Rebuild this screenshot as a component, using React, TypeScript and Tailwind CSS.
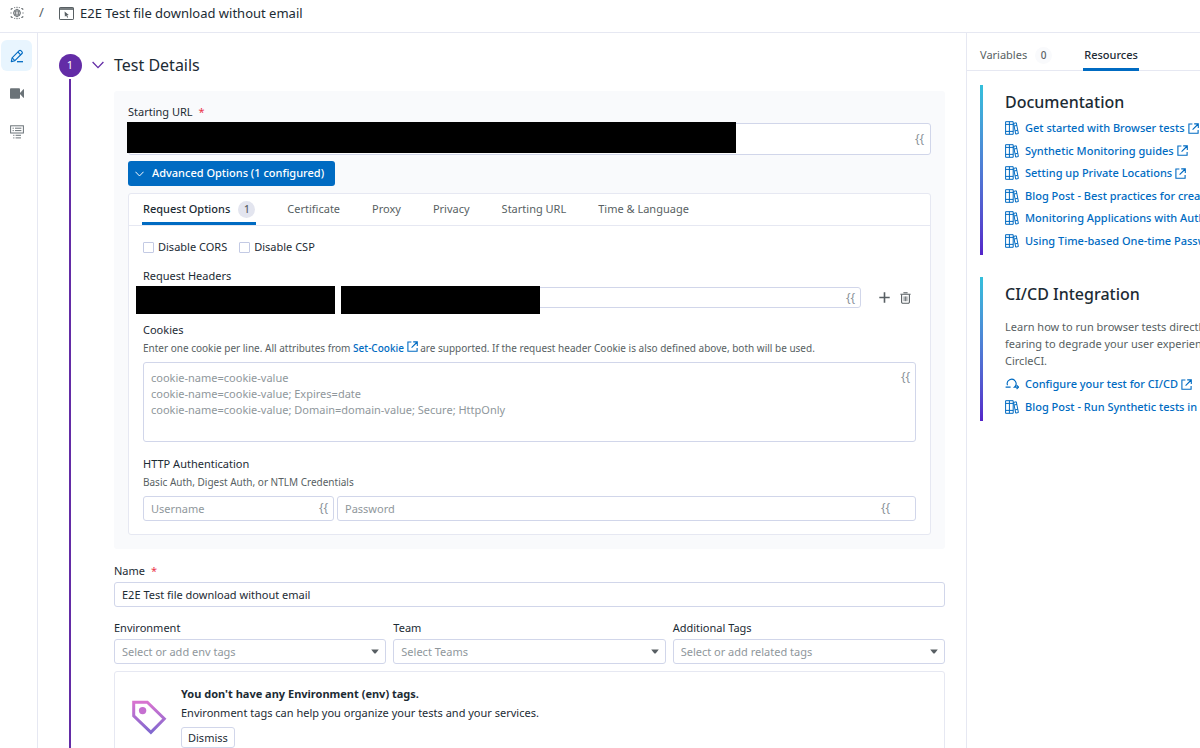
import React, { useState } from 'react';
import clsx from 'clsx';

type IconProps = { className?: string };

const GlobeIcon: React.FC<IconProps> = ({ className }) => (
  <svg viewBox="0 0 14 14" className={className} fill="none" stroke="currentColor" aria-hidden="true">
    <circle cx="7" cy="7" r="3.4" strokeWidth="0.9" />
    <ellipse cx="7" cy="7" rx="1.5" ry="3.4" strokeWidth="0.7" />
    <path d="M3.6 7h6.8M4 5.4h6M4 8.6h6" strokeWidth="0.5" />
    <path d="M7 0.8v1.4M7 11.8v1.4" strokeWidth="1" />
    <path d="M1.2 4V2.6h1.6M12.8 4V2.6h-1.6M1.2 10v1.4h1.6M12.8 10v1.4h-1.6M4.2 1.6h1M8.8 1.6h1M4.2 12.4h1M8.8 12.4h1M1 6.4v1.2M13 6.4v1.2" strokeWidth="0.9" />
  </svg>
);

const BrowserIcon: React.FC<IconProps> = ({ className }) => (
  <svg viewBox="0 0 15 13" className={className} fill="none" stroke="currentColor" aria-hidden="true">
    <rect x="0.5" y="0.5" width="14" height="12" rx="0.6" />
    <path d="M0.5 2h14" strokeWidth="1.6" />
    <path d="M5.6 4.6l4.2 3.3-1.7 0.3 1 2-0.9 0.5-1-2.1-1.3 1.1z" fill="currentColor" stroke="none" />
  </svg>
);

const PencilIcon: React.FC<IconProps> = ({ className }) => (
  <svg viewBox="0 0 14 14" className={className} fill="none" stroke="currentColor" strokeWidth="1.1" aria-hidden="true">
    <path d="M1.3 12.6l0.8-3.8 7.1-7.1a1.2 1.2 0 0 1 1.7 0l1.1 1.1a1.2 1.2 0 0 1 0 1.7L4.9 11.7z" strokeLinejoin="round" />
    <path d="M7.9 3l2.8 2.8M2.2 8.9l2.6 2.7" />
    <path d="M7 12.7h6" strokeWidth="1.3" />
  </svg>
);

const VideoIcon: React.FC<IconProps> = ({ className }) => (
  <svg viewBox="0 0 14 11" className={className} fill="currentColor" aria-hidden="true">
    <rect x="0" y="0.3" width="10" height="10.4" rx="0.9" />
    <path d="M9.5 5.5L13.4 1.2h0.6v8.6h-0.6z" />
  </svg>
);

const StepsIcon: React.FC<IconProps> = ({ className }) => (
  <svg viewBox="0 0 14 14" className={className} fill="none" stroke="currentColor" aria-hidden="true">
    <rect x="0.6" y="0.8" width="12.8" height="7.2" />
    <path d="M2.6 3.2h1.2M5 3.2h6.4M2.6 5.6h1.2M5 5.6h6.4" />
    <path d="M3.2 10.3h1.2M5.6 10.3h5.4M3.2 12.9h1.2M5.6 12.9h5.4" />
  </svg>
);

const ChevronIcon: React.FC<IconProps> = ({ className }) => (
  <svg viewBox="0 0 12 8" className={className} fill="none" stroke="currentColor" strokeWidth="1.3" aria-hidden="true">
    <path d="M0.6 1l5.4 5.6L11.4 1" />
  </svg>
);

const ExternalIcon: React.FC<IconProps> = ({ className }) => (
  <svg viewBox="0 0 11 11" className={className} fill="none" stroke="currentColor" strokeWidth="1.1" aria-hidden="true">
    <path d="M4.4 1H0.9v9.2h9.2V7M6.2 0.9h4.1v4.1M10.2 1L4.6 6.6" />
  </svg>
);

const BooksIcon: React.FC<IconProps> = ({ className }) => (
  <svg viewBox="0 0 14 14" className={className} fill="none" stroke="currentColor" aria-hidden="true">
    <path d="M0.6 0.7h7.6v12.6H0.6zM4.4 0.7v12.6M0.6 3.4h7.6M0.6 10.4h7.6" />
    <path d="M8.6 2.4l2.7-0.6 2.1 10.7-2.7 0.6zM9.2 5l2.7-0.6M10 9.9l2.8-0.6" />
  </svg>
);

const LoopIcon: React.FC<IconProps> = ({ className }) => (
  <svg viewBox="0 0 14 14" className={className} fill="none" stroke="currentColor" strokeWidth="1.1" aria-hidden="true">
    <path d="M2.5 8.2a4.4 4.4 0 1 1 6.9 1.9h4" />
    <path d="M11.6 8.2l1.9 1.9-1.9 1.9M0.6 10.1h5" />
  </svg>
);

const PlusIcon: React.FC<IconProps> = ({ className }) => (
  <svg viewBox="0 0 11 11" className={className} fill="none" stroke="currentColor" strokeWidth="1.6" aria-hidden="true">
    <path d="M5.5 0.3v10.4M0.3 5.5h10.4" />
  </svg>
);

const TrashIcon: React.FC<IconProps> = ({ className }) => (
  <svg viewBox="0 0 11 12" className={className} fill="none" stroke="currentColor" aria-hidden="true">
    <path d="M0.4 2.3h10.2M3.4 0.8h4.2" strokeWidth="1.1" />
    <path d="M1.6 2.5v7.6a1.2 1.2 0 0 0 1.2 1.2h5.4a1.2 1.2 0 0 0 1.2-1.2V2.5" strokeWidth="1.1" />
    <path d="M4.1 4.4v4.8M5.5 4.4v4.8M6.9 4.4v4.8" strokeWidth="0.8" />
  </svg>
);

const TagIcon: React.FC<IconProps> = ({ className }) => (
  <svg viewBox="0 0 35 35" className={className} fill="none" aria-hidden="true">
    <defs>
      <linearGradient id="tag" x1="0" y1="0" x2="0" y2="1">
        <stop offset="0" stopColor="#d873d0" />
        <stop offset="1" stopColor="#8068cf" />
      </linearGradient>
    </defs>
    <path d="M1.7 2.2h13.6l17 16.6-13.4 13.6L1.7 15.8z" stroke="url(#tag)" strokeWidth="3" />
    <circle cx="10.6" cy="10.6" r="3.7" fill="#c56fd0" />
  </svg>
);

const Required = () => <span className="ml-1.5 text-[#eb364b]">*</span>;

const Braces: React.FC<IconProps> = ({ className }) => (
  <button
    type="button"
    aria-label="Insert variable"
    className={clsx('absolute text-xs leading-4 text-[#8a9298]', className)}
  >
    {'{{'}
  </button>
);

const field =
  'block w-full rounded-[3px] border border-[#d1d6ea] bg-white px-[7px] text-[11px] leading-4 text-[#1c2b34] placeholder:text-[#8f979c]';
const label = 'block text-[11px] leading-4';

const tabs = ['Request Options', 'Certificate', 'Proxy', 'Privacy', 'Starting URL', 'Time & Language'];

const tagSelects = [
  { id: 'env', label: 'Environment', placeholder: 'Select or add env tags' },
  { id: 'team', label: 'Team', placeholder: 'Select Teams' },
  { id: 'tags', label: 'Additional Tags', placeholder: 'Select or add related tags' },
];

const docLinks = [
  { text: 'Get started with Browser tests', icon: BooksIcon },
  { text: 'Synthetic Monitoring guides', icon: BooksIcon },
  { text: 'Setting up Private Locations', icon: BooksIcon },
  { text: 'Blog Post - Best practices for creating tests', icon: BooksIcon },
  { text: 'Monitoring Applications with Authentication', icon: BooksIcon },
  { text: 'Using Time-based One-time Passwords', icon: BooksIcon },
];

const ciLinks = [
  { text: 'Configure your test for CI/CD', icon: LoopIcon },
  { text: 'Blog Post - Run Synthetic tests in CI', icon: BooksIcon },
];

const ResourceLinks: React.FC<{ links: typeof docLinks; className?: string }> = ({ links, className }) => (
  <ul className={clsx('flex flex-col justify-between', className)}>
    {links.map(({ text, icon: Icon }) => (
      <li key={text}>
        <a href="#" className="flex items-center text-[11px] leading-4 font-medium whitespace-nowrap text-[#006bc2]">
          <Icon className="mr-1.5 size-3.5 shrink-0" />
          {text}
          <ExternalIcon className="ml-[3px] size-[11px] shrink-0" />
        </a>
      </li>
    ))}
  </ul>
);

const Resources = () => (
  <aside className="w-[234px] shrink-0 overflow-hidden border-l border-[#e6e8f2]">
    <div className="flex h-[38px] gap-[31px] border-b border-[#e6e8f2] pl-[13px] text-[11px]">
      <button type="button" className="flex items-center gap-2 pt-[7px] text-[#585f63]">
        Variables
        <span className="flex size-[17px] items-center justify-center rounded-full bg-[#f9fafc] text-[10px] font-medium">0</span>
      </button>
      <button type="button" className="-mb-px border-b-3 border-[#006bc2] px-px pt-[9px] font-medium">
        Resources
      </button>
    </div>

    <div className="space-y-[22px] pt-3.5 pl-[13px]">
      <section className="flex">
        <div className="w-[3px] shrink-0 bg-linear-to-b from-[#33bfdb] to-[#5423c9]" />
        <div className="pt-[7px] pb-1.5 pl-[22px]">
          <h2 className="text-base leading-5 font-medium">Documentation</h2>
          <ResourceLinks links={docLinks} className="mt-2 h-[129px]" />
        </div>
      </section>
      <section className="flex">
        <div className="w-[3px] shrink-0 bg-linear-to-b from-[#33bfdb] to-[#5423c9]" />
        <div className="pt-[7px] pb-1.5 pl-[22px]">
          <h2 className="text-base leading-5 font-medium">CI/CD Integration</h2>
          <p className="mt-3.5 text-[11px] leading-[17px] whitespace-nowrap text-[#585f63]">
            Learn how to run browser tests directly
            <br />
            fearing to degrade your user experience
            <br />
            CircleCI.
          </p>
          <ResourceLinks links={ciLinks} className="mt-[7px] h-[39px]" />
        </div>
      </section>
    </div>
  </aside>
);

const App: React.FC = () => {
  const [activeTab, setActiveTab] = useState('Request Options');
  const [name, setName] = useState('E2E Test file download without email');

  return (
    <div className="flex h-screen flex-col overflow-hidden bg-white font-['Noto_Sans',sans-serif] text-[#1c2b34]">
      <header className="flex h-[33px] shrink-0 items-center border-b border-[#e6e8f2] pb-1.5 pl-2.5">
        <a href="#" aria-label="Synthetic Monitoring" className="text-[#585f63]">
          <GlobeIcon className="size-3.5" />
        </a>
        <span className="w-[35px] text-center text-[13px] text-[#585f63]">/</span>
        <BrowserIcon className="h-[13px] w-[15px] text-[#585f63]" />
        <h1 className="ml-1.5 text-[13px] leading-5">E2E Test file download without email</h1>
      </header>

      <div className="flex min-h-0 flex-1">
        <nav className="flex w-[38px] shrink-0 flex-col items-center border-r border-[#e6e8f2] pt-[7px] pr-1 text-[#6b7378]">
          <button type="button" aria-label="Edit" className="flex size-[31px] items-center justify-center rounded-md bg-[#e8f5fe] text-[#006bc2]">
            <PencilIcon className="size-3.5" />
          </button>
          <button type="button" aria-label="Record" className="mt-[7px] flex size-[31px] items-center justify-center">
            <VideoIcon className="h-[11px] w-3.5" />
          </button>
          <button type="button" aria-label="Steps" className="mt-[7px] flex size-[31px] items-center justify-center">
            <StepsIcon className="size-3.5" />
          </button>
        </nav>

        <main className="flex min-w-0 flex-1 pt-[21px] pr-[21px] pl-[21px]">
          <div className="flex w-[22px] shrink-0 flex-col items-center">
            <span className="flex size-[23px] shrink-0 items-center justify-center rounded-full bg-[#632ca6] text-[11px] text-white">1</span>
            <div className="mt-0.5 w-0.5 flex-1 bg-[#632ca6]" />
          </div>

          <div className="min-w-0 flex-1 pl-[11px]">
            <button type="button" className="flex h-[23px] items-center gap-2.5 pb-px">
              <ChevronIcon className="h-2 w-3 text-[#632ca6]" />
              <h2 className="text-base leading-5">Test Details</h2>
            </button>

            <div className="mt-3.5 pl-[22px]">
              <div className="rounded-[3px] bg-[#f9fafc] px-3.5 pt-[13px] pb-3.5">
                <label htmlFor="url" className={label}>
                  Starting URL
                  <Required />
                </label>
                <div className="relative mt-[3px]">
                  <input id="url" className={clsx(field, 'h-8')} />
                  <span className="absolute -top-px -left-px h-[31px] w-[609px] bg-black" />
                  <Braces className="top-2 right-[7px]" />
                </div>

                <button
                  type="button"
                  className="mt-1.5 flex h-[25px] items-center gap-2 rounded-[3px] bg-[#006bc2] pr-[11px] pl-[7px] text-[11px] font-medium text-white"
                >
                  <ChevronIcon className="h-1.5 w-[9px]" />
                  Advanced Options (1 configured)
                </button>

                <div className="mt-[7px] rounded-[3px] border border-[#e6e8f2] bg-white">
                  <div role="tablist" className="flex h-8 gap-[30px] border-b border-[#e6e8f2] pl-[13px] text-[11px]">
                    {tabs.map((tab) => (
                      <button
                        key={tab}
                        type="button"
                        role="tab"
                        aria-selected={tab === activeTab}
                        onClick={() => setActiveTab(tab)}
                        className={clsx(
                          'flex items-center gap-2 border-b-3 px-px pt-[3px]',
                          tab === activeTab ? 'border-[#006bc2] font-medium' : 'border-transparent text-[#585f63]'
                        )}
                      >
                        {tab}
                        {tab === 'Request Options' && (
                          <span className="flex size-[17px] items-center justify-center rounded-full bg-[#e3e5ef] text-[10px] font-medium text-[#585f63]">
                            1
                          </span>
                        )}
                      </button>
                    ))}
                  </div>

                  <div className="px-3.5 py-[13px]">
                    <div className="flex gap-3 text-[11px] leading-4">
                      {['Disable CORS', 'Disable CSP'].map((option) => (
                        <label key={option} className="flex items-center gap-1">
                          <input
                            type="checkbox"
                            className="size-[11px] appearance-none rounded-[1px] border border-[#c3cae4] bg-white checked:bg-[#006bc2]"
                          />
                          {option}
                        </label>
                      ))}
                    </div>

                    <label htmlFor="header-name" className={clsx(label, 'mt-[13px]')}>Request Headers</label>
                    <div className="mt-[3px] flex items-center">
                      <div className="relative w-[191px]">
                        <input id="header-name" className={clsx(field, 'h-[21px]')} />
                        <span className="absolute -top-px -left-[7px] h-7 w-[199px] bg-black" />
                      </div>
                      <div className="relative ml-[7px] flex-1">
                        <input aria-label="Header value" className={clsx(field, 'h-[21px]')} />
                        <span className="absolute -top-px left-0 h-7 w-[199px] bg-black" />
                        <Braces className="top-[3px] right-1.5" />
                      </div>
                      <button type="button" aria-label="Add header" className="ml-[18px] text-[#585f63]">
                        <PlusIcon className="size-[11px]" />
                      </button>
                      <button type="button" aria-label="Delete header" className="mr-[5px] ml-2.5 text-[#585f63]">
                        <TrashIcon className="h-3 w-[11px]" />
                      </button>
                    </div>

                    <label htmlFor="cookies" className={clsx(label, 'mt-3.5')}>Cookies</label>
                    <p className="mt-0.5 text-[10px] leading-4 text-[#585f63]">
                      Enter one cookie per line. All attributes from{' '}
                      <a href="#" className="font-medium text-[#006bc2]">
                        Set-Cookie <ExternalIcon className="inline size-[11px] align-text-top" />
                      </a>{' '}
                      are supported. If the request header Cookie is also defined above, both will be used.
                    </p>
                    <div className="relative mt-1.5">
                      <textarea
                        id="cookies"
                        className={clsx(field, 'h-20 resize-none pt-[7px]')}
                        placeholder={
                          'cookie-name=cookie-value\ncookie-name=cookie-value; Expires=date\ncookie-name=cookie-value; Domain=domain-value; Secure; HttpOnly'
                        }
                      />
                      <Braces className="top-[7px] right-1.5" />
                    </div>

                    <label htmlFor="username" className={clsx(label, 'mt-3.5')}>HTTP Authentication</label>
                    <p className="mt-0.5 text-[10px] leading-4 text-[#585f63]">Basic Auth, Digest Auth, or NTLM Credentials</p>
                    <div className="mt-1.5 flex gap-[3px]">
                      <div className="relative w-[191px]">
                        <input id="username" placeholder="Username" className={clsx(field, 'h-[25px]')} />
                        <Braces className="top-1 right-1.5" />
                      </div>
                      <div className="relative flex-1">
                        <input type="password" aria-label="Password" placeholder="Password" className={clsx(field, 'h-[25px]')} />
                        <Braces className="top-1 right-[26px]" />
                      </div>
                    </div>
                  </div>
                </div>
              </div>

              <label htmlFor="name" className={clsx(label, 'mt-3.5')}>
                Name
                <Required />
              </label>
              <input id="name" value={name} onChange={(e) => setName(e.target.value)} className={clsx(field, 'mt-[3px] h-[25px]')} />

              <div className="mt-[13px] grid grid-cols-3 gap-[7px]">
                {tagSelects.map((select) => (
                  <div key={select.id}>
                    <label htmlFor={select.id} className={label}>{select.label}</label>
                    <div className="relative mt-[3px]">
                      <select id={select.id} className={clsx(field, 'h-[25px] appearance-none text-[#8f979c]')}>
                        <option>{select.placeholder}</option>
                      </select>
                      <svg viewBox="0 0 8 5" className="pointer-events-none absolute top-2.5 right-[7px] h-[5px] w-2 fill-[#585f63]" aria-hidden="true">
                        <path d="M0.2 0.4h7.6L5 3.9q-1 1-2 0z" />
                      </svg>
                    </div>
                  </div>
                ))}
              </div>

              <section className="mt-[7px] flex rounded-[3px] border border-[#e6e8f2] px-[17px] pt-3.5 pb-6">
                <TagIcon className="mt-3.5 size-[35px]" />
                <div className="ml-3.5 text-[11px] leading-4">
                  <h3 className="font-bold">You don't have any Environment (env) tags.</h3>
                  <p className="mt-[3px]">Environment tags can help you organize your tests and your services.</p>
                  <button type="button" className="mt-1.5 h-[21px] rounded-[3px] border border-[#d1d6ea] px-1.5">Dismiss</button>
                </div>
              </section>
            </div>
          </div>
        </main>

        <Resources />
      </div>
    </div>
  );
};

export default App;
